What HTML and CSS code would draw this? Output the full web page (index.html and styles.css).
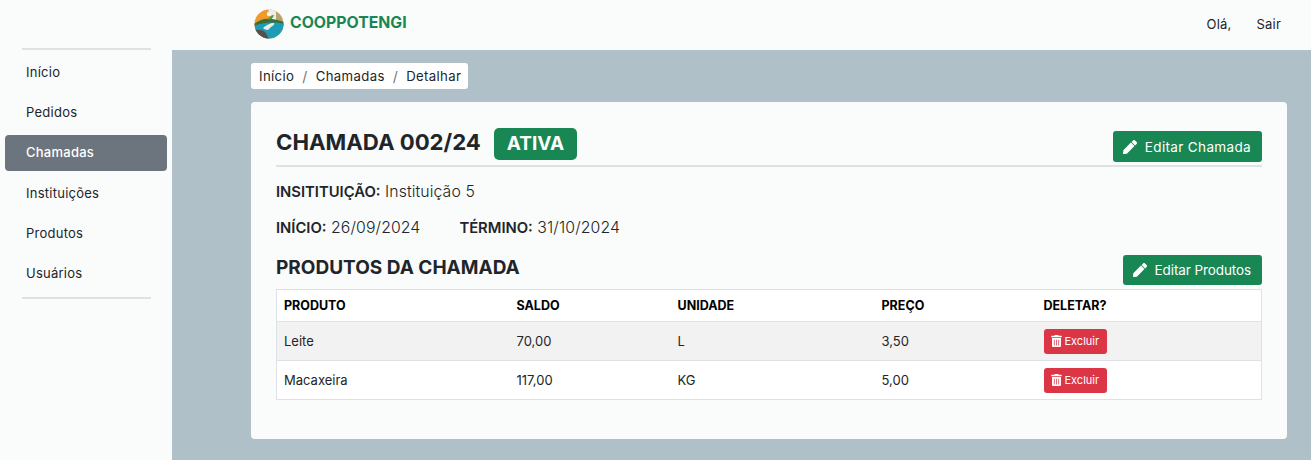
FILE: index.html
```html
<!DOCTYPE html>
<html>
<head>
    <title>Detalhar Chamada</title>
    <link rel="stylesheet" href="styles.css">
</head>
<body>

    <nav class="topbar">
        <a class="brand" href="#">
            <svg class="brand-logo" viewBox="0 0 30 30" width="30" height="30">
                <defs><clipPath id="logoClip"><circle cx="15" cy="15" r="14.5"/></clipPath></defs>
                <g clip-path="url(#logoClip)">
                    <rect width="30" height="30" fill="#f09a2e"/>
                    <path d="M14 0h16v12h-12z" fill="#e9eee6"/>
                    <path d="M22 2h8v10h-8z" fill="#b9a36c"/>
                    <path d="M0 15c6-5 12-6 18-5s9 2 12 3v4H0z" fill="#3f6b35"/>
                    <path d="M0 17c7-3 20-5 30-2v15H0z" fill="#1f9cb5"/>
                    <path d="M0 21c5-1 10 0 12 3l3 6H0z" fill="#55524e"/>
                    <path d="M9 19c3-3 7-5 11-5 1 1-1 3-3 4l-3 3c-2 0-4-1-5-2z" fill="#e8efe9"/>
                    <path d="M14 11c1-3 3-5 6-5-1 3-3 5-6 5z" fill="#4d9a3a"/>
                    <circle cx="15" cy="5" r="2.2" fill="#f4f4ee"/>
                </g>
            </svg>
            <span class="brand-name">COOPPOTENGI</span>
        </a>
        <div class="user-links">
            <span>Olá,</span>
            <a href="#">Sair</a>
        </div>
    </nav>

    <div class="page">
        <aside class="sidebar">
            <hr class="side-line">
            <ul class="side-menu">
                <li><a href="#">Início</a></li>
                <li><a href="#">Pedidos</a></li>
                <li><a class="active" href="#">Chamadas</a></li>
                <li><a href="#">Instituições</a></li>
                <li><a href="#">Produtos</a></li>
                <li><a href="#">Usuários</a></li>
            </ul>
            <hr class="side-line">
        </aside>

        <main class="content">
            <ol class="breadcrumb">
                <li>Início</li>
                <li class="crumb-sep">/</li>
                <li>Chamadas</li>
                <li class="crumb-sep">/</li>
                <li>Detalhar</li>
            </ol>

            <section class="card">
                <div class="card-head">
                    <h1>CHAMADA 002/24 <span class="badge">ATIVA</span></h1>
                    <a class="btn-green" href="#">
                        <svg class="icon" viewBox="0 0 512 512" width="14" height="14"><path fill="currentColor" d="M290.7 93.1l128.2 128.2L140.600 499.6 26.300 512C11 513.700-1.700 500.900 0 485.600l12.700-114.300zM498.200 74L438 13.800c-18.800-18.700-49.200-18.700-67.900 0l-56.700 56.700 128.200 128.200 56.600-56.700c18.800-18.700 18.800-49.100 0-68z"/></svg>
                        Editar Chamada
                    </a>
                </div>

                <p class="info"><b>INSITITUIÇÃO:</b> Instituição 5</p>
                <p class="info dates">
                    <span><b>INÍCIO:</b> 26/09/2024</span>
                    <span><b>TÉRMINO:</b> 31/10/2024</span>
                </p>

                <div class="products-head">
                    <h2>PRODUTOS DA CHAMADA</h2>
                    <a class="btn-green" href="#">
                        <svg class="icon" viewBox="0 0 512 512" width="14" height="14"><path fill="currentColor" d="M290.7 93.1l128.2 128.2L140.600 499.6 26.300 512C11 513.700-1.700 500.900 0 485.600l12.700-114.300zM498.200 74L438 13.800c-18.800-18.700-49.200-18.700-67.900 0l-56.700 56.700 128.200 128.200 56.600-56.700c18.800-18.700 18.800-49.100 0-68z"/></svg>
                        Editar Produtos
                    </a>
                </div>

                <table class="products">
                    <thead>
                        <tr>
                            <th class="col-product">PRODUTO</th>
                            <th class="col-balance">SALDO</th>
                            <th class="col-unit">UNIDADE</th>
                            <th class="col-price">PREÇO</th>
                            <th>DELETAR?</th>
                        </tr>
                    </thead>
                    <tbody>
                        <tr class="striped">
                            <td>Leite</td>
                            <td>70,00</td>
                            <td>L</td>
                            <td>3,50</td>
                            <td><a class="btn-red" href="#">
                                <svg viewBox="0 0 448 512" width="11" height="12"><path fill="currentColor" d="M32 464a48 48 0 0 0 48 48h288a48 48 0 0 0 48-48V128H32zm272-256a16 16 0 0 1 32 0v224a16 16 0 0 1-32 0zm-96 0a16 16 0 0 1 32 0v224a16 16 0 0 1-32 0zm-96 0a16 16 0 0 1 32 0v224a16 16 0 0 1-32 0zM432 32H312l-9.400-18.700A24 24 0 0 0 281.100 0H166.800a23.700 23.700 0 0 0-21.400 13.300L136 32H16A16 16 0 0 0 0 48v32a16 16 0 0 0 16 16h416a16 16 0 0 0 16-16V48a16 16 0 0 0-16-16z"/></svg>
                                Excluir
                            </a></td>
                        </tr>
                        <tr>
                            <td>Macaxeira</td>
                            <td>117,00</td>
                            <td>KG</td>
                            <td>5,00</td>
                            <td><a class="btn-red" href="#">
                                <svg viewBox="0 0 448 512" width="11" height="12"><path fill="currentColor" d="M32 464a48 48 0 0 0 48 48h288a48 48 0 0 0 48-48V128H32zm272-256a16 16 0 0 1 32 0v224a16 16 0 0 1-32 0zm-96 0a16 16 0 0 1 32 0v224a16 16 0 0 1-32 0zm-96 0a16 16 0 0 1 32 0v224a16 16 0 0 1-32 0zM432 32H312l-9.400-18.700A24 24 0 0 0 281.100 0H166.800a23.700 23.700 0 0 0-21.400 13.300L136 32H16A16 16 0 0 0 0 48v32a16 16 0 0 0 16 16h416a16 16 0 0 0 16-16V48a16 16 0 0 0-16-16z"/></svg>
                                Excluir
                            </a></td>
                        </tr>
                    </tbody>
                </table>
            </section>
        </main>
    </div>

</body>
</html>
```

FILE: styles.css
```css
* {
    box-sizing: border-box;
}

body {
    margin: 0;
    height: 460px;
    overflow: hidden;
    font-family: Inter, "Open Sans", sans-serif;
    font-size: 13px;
    color: #212529;
    background-color: #fafbfb;
    display: flex;
    flex-direction: column;
}

a {
    color: inherit;
    text-decoration: none;
}

.topbar {
    height: 50px;
    flex-shrink: 0;
    display: flex;
    align-items: center;
    justify-content: space-between;
    padding: 0 30px 2px 254px;
}

.brand {
    display: flex;
    align-items: center;
    gap: 6px;
}

.brand-name {
    padding-bottom: 3px;
    font-size: 15.800px;
    font-weight: 700;
    color: #198754;
}

.user-links {
    display: flex;
    gap: 25px;
    letter-spacing: 0.2px;
}

.page {
    flex: 1;
    display: flex;
}

.sidebar {
    width: 172px;
    flex-shrink: 0;
    margin-top: -2px;
}

.side-line {
    height: 2px;
    margin: 0 21px 0 22px;
    border: none;
    background-color: #dde2e2;
}

.side-menu {
    list-style: none;
    margin: 0;
    padding: 3px 5px 1px;
    letter-spacing: 0.25px;
}

.side-menu a {
    display: flex;
    align-items: center;
    height: 36px;
    margin: 2px 0 4.200px;
    padding: 0 0 2px 21px;
    border-radius: 4px;
}

.side-menu a.active {
    color: #fff;
    font-weight: 500;
    background-color: #6c757d;
}

.content {
    flex: 1;
    padding: 13px 24px 0 79px;
    background-color: #b0c0c8;
}

.breadcrumb {
    list-style: none;
    display: inline-flex;
    align-items: center;
    gap: 8px;
    height: 26px;
    margin: 0 0 13px;
    padding: 0 7px 0 8px;
    border-radius: 3px;
    font-size: 13.200px;
    letter-spacing: 0.35px;
    background-color: #fff;
}

.crumb-sep {
    font-size: 14px;
    color: #6c757d;
}

.card {
    height: 337px;
    padding: 25px 25px 0;
    border-radius: 4px;
    background-color: #fafbfb;
}

.card-head {
    display: flex;
    align-items: flex-end;
    justify-content: space-between;
    height: 40px;
    padding-bottom: 3px;
    border-bottom: 2px solid #dde2e2;
}

h1 {
    display: flex;
    align-items: flex-start;
    gap: 13px;
    margin: 0 0 auto;
    padding-top: 1px;
    font-size: 22.200px;
    font-weight: 700;
    line-height: 28px;
}

.badge {
    padding: 0 13px;
    border-radius: 5px;
    font-size: 19px;
    line-height: 32px;
    color: #fff;
    background-color: #198754;
}

.btn-green {
    display: inline-flex;
    align-items: center;
    gap: 8px;
    height: 31px;
    padding: 0 11px 0 10px;
    border-radius: 3px;
    font-size: 13.500px;
    letter-spacing: 0.35px;
    color: #fff;
    background-color: #198754;
}

.icon {
    flex-shrink: 0;
}

.info {
    margin: 14px 0 0;
    font-size: 15.800px;
    line-height: 22px;
    font-weight: 300;
    letter-spacing: 0.1px;
}

.info b {
    font-size: 14.800px;
    font-weight: 600;
    letter-spacing: 0;
}

.dates {
    margin-top: 14px;
    display: flex;
    gap: 39px;
}

.products-head {
    display: flex;
    align-items: flex-end;
    justify-content: space-between;
    height: 30px;
    margin-top: 16px;
}

.products-head .btn-green {
    height: 30px;
    letter-spacing: -0.1px;
}

h2 {
    margin: 0;
    font-size: 19px;
    font-weight: 700;
    line-height: 26px;
    padding-bottom: 4px;
}

.products {
    width: 100%;
    margin-top: 4px;
    border-collapse: collapse;
    table-layout: fixed;
    border: 1px solid #dee2e6;
}

.products th {
    height: 32px;
    padding: 0 7px;
    text-align: left;
    font-size: 12.500px;
    font-weight: 700;
    color: #000;
}

.products td {
    height: 39px;
    padding: 0 7px;
    border-top: 1px solid #dee2e6;
}

.striped {
    background-color: #f2f2f2;
}

.products tbody tr:not(.striped) {
    background-color: #fff;
}

.products thead tr {
    background-color: #fff;
}

.col-product {
    width: 233px;
}

.col-balance {
    width: 161px;
}

.col-unit {
    width: 204px;
}

.col-price {
    width: 162px;
}

.btn-red {
    display: inline-flex;
    align-items: center;
    gap: 3px;
    height: 25px;
    padding: 0 8px 0 7px;
    border-radius: 3px;
    font-size: 11px;
    color: #fff;
    background-color: #dc3545;
}
```
